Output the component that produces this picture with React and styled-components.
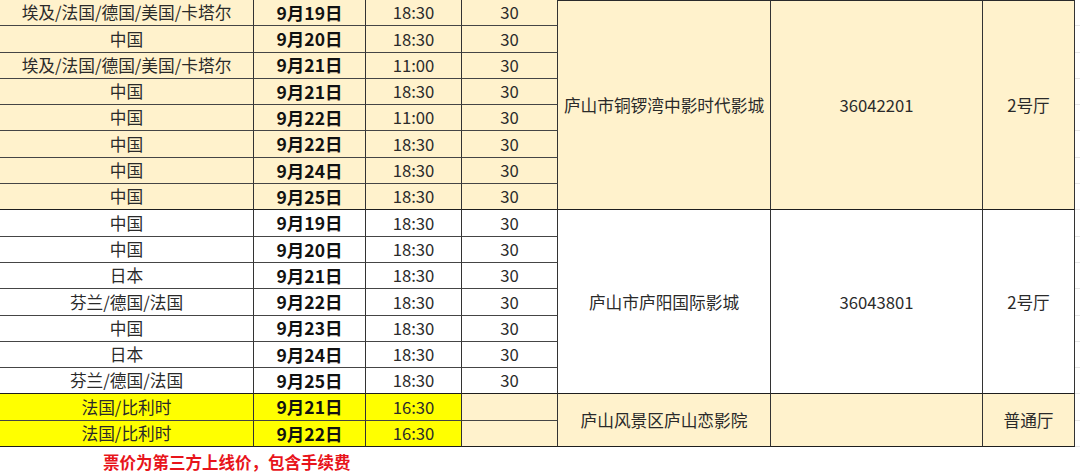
import styled, { createGlobalStyle } from 'styled-components';

const GlobalStyle = createGlobalStyle`
  html, body {
    margin: 0;
    padding: 0;
    background: #ffffff;
  }
  body {
    font-family: "Noto Sans CJK SC", "Noto Sans", sans-serif;
    color: #2b2b2b;
  }
`;

const FILL = {
  beige: '#fff2cc',
  white: '#ffffff',
  yellow: '#ffff00',
};

const groups = [
  {
    tone: 'beige',
    cinema: '庐山市铜锣湾中影时代影城',
    code: '36042201',
    hall: '2号厅',
    rows: [
      ['埃及/法国/德国/美国/卡塔尔', '9月19日', '18:30', '30'],
      ['中国', '9月20日', '18:30', '30'],
      ['埃及/法国/德国/美国/卡塔尔', '9月21日', '11:00', '30'],
      ['中国', '9月21日', '18:30', '30'],
      ['中国', '9月22日', '11:00', '30'],
      ['中国', '9月22日', '18:30', '30'],
      ['中国', '9月24日', '18:30', '30'],
      ['中国', '9月25日', '18:30', '30'],
    ],
  },
  {
    tone: 'white',
    cinema: '庐山市庐阳国际影城',
    code: '36043801',
    hall: '2号厅',
    rows: [
      ['中国', '9月19日', '18:30', '30'],
      ['中国', '9月20日', '18:30', '30'],
      ['日本', '9月21日', '18:30', '30'],
      ['芬兰/德国/法国', '9月22日', '18:30', '30'],
      ['中国', '9月23日', '18:30', '30'],
      ['日本', '9月24日', '18:30', '30'],
      ['芬兰/德国/法国', '9月25日', '18:30', '30'],
    ],
  },
  {
    tone: 'beige',
    rowTone: 'yellow',
    cinema: '庐山风景区庐山恋影院',
    code: '',
    hall: '普通厅',
    rows: [
      ['法国/比利时', '9月21日', '16:30', ''],
      ['法国/比利时', '9月22日', '16:30', ''],
    ],
  },
];

const Page = styled.div`
  width: 1080px;
  height: 476px;
  overflow: hidden;
`;

const Sheet = styled.div`
  display: grid;
  grid-template-columns: 254px 112px 96px 96px 213px 212px 92px 5px;
  grid-template-rows: repeat(17, 26.3px);
`;

const Cell = styled.div`
  box-sizing: border-box;
  display: flex;
  align-items: center;
  justify-content: center;
  background: ${p => FILL[p.$tone]};
  border-right: 1px solid #333333;
  border-bottom: 1px solid ${p => (p.$end ? '#1e1e1e' : '#454545')};
  border-top: ${p => (p.$top ? '1px solid #2a2a2a' : 'none')};
  font-size: 16.7px;
  line-height: 1;
  white-space: nowrap;
  color: #2a2a2a;
`;

const DateCell = styled(Cell)`
  font-size: 17.5px;
  font-weight: 700;
  color: #111111;
`;

const Merged = styled(Cell)`
  grid-row: span ${p => p.$span};
  border-bottom-color: #1e1e1e;
`;

const Spill = styled.div`
  box-sizing: border-box;
  border-bottom: 1px solid #e6e6e6;
`;

const Note = styled.div`
  padding: 5px 0 0 103px;
  font-size: 16.5px;
  font-weight: 700;
  color: #e8141b;
  line-height: 20px;
`;

const App = () => (
  <Page>
    <GlobalStyle />
    <Sheet>
      {groups.map((group, gi) =>
        group.rows.map(([country, date, time, price], ri) => {
          const rowTone = group.rowTone || group.tone;
          const end = ri === group.rows.length - 1;
          return [
            <Cell key={`${gi}-${ri}-c`} $tone={rowTone} $end={end}>{country}</Cell>,
            <DateCell key={`${gi}-${ri}-d`} $tone={rowTone} $end={end}>{date}</DateCell>,
            <Cell key={`${gi}-${ri}-t`} $tone={rowTone} $end={end}>{time}</Cell>,
            <Cell key={`${gi}-${ri}-p`} $tone={group.tone} $end={end}>{price}</Cell>,
            ri === 0 && (
              <Merged key={`${gi}-m1`} $tone={group.tone} $span={group.rows.length} $top={gi === 0}>
                {group.cinema}
              </Merged>
            ),
            ri === 0 && (
              <Merged key={`${gi}-m2`} $tone={group.tone} $span={group.rows.length} $top={gi === 0}>
                {group.code}
              </Merged>
            ),
            ri === 0 && (
              <Merged key={`${gi}-m3`} $tone={group.tone} $span={group.rows.length} $top={gi === 0}>
                {group.hall}
              </Merged>
            ),
            <Spill key={`${gi}-${ri}-s`} />,
          ];
        })
      )}
    </Sheet>
    <Note>票价为第三方上线价，包含手续费</Note>
  </Page>
);

export default App;
